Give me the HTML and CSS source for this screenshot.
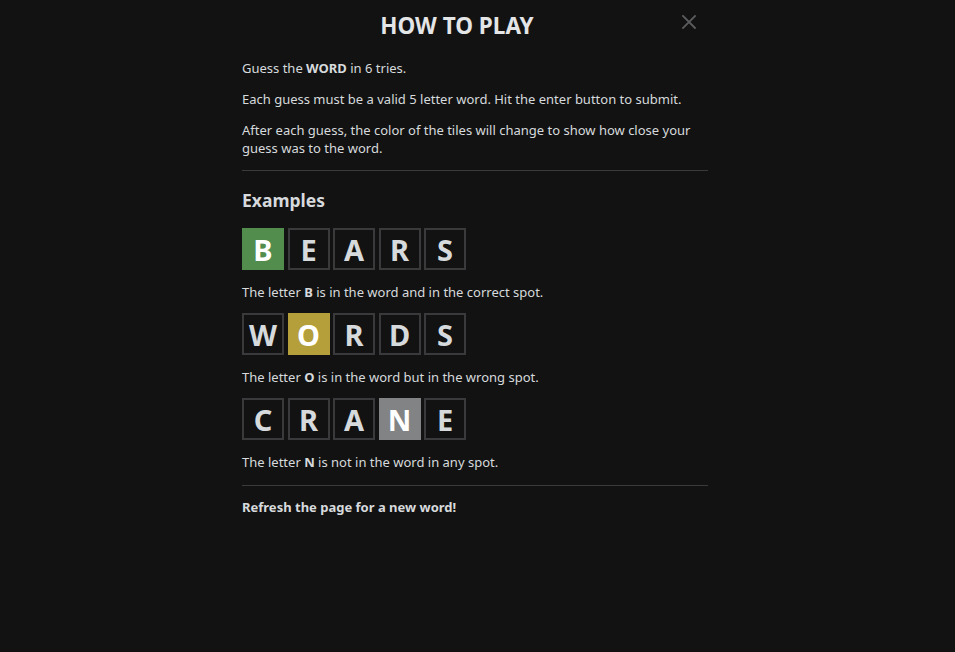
FILE: index.html
```html
<!DOCTYPE html>
<html lang="en">
<head>
<meta charset="utf-8">
<title>How to play</title>
<link rel="stylesheet" href="styles.css">
</head>
<body>
<main class="help">
  <header class="help-header">
    <h1 class="help-title">HOW TO PLAY</h1>
    <button class="close" aria-label="Close">
      <svg width="14" height="14" viewBox="0 0 14 14"><path d="M1 1 L13 13 M13 1 L1 13" stroke="#5b5c5e" stroke-width="1.8" fill="none" stroke-linecap="square"/></svg>
    </button>
  </header>
  <section class="intro">
    <p>Guess the <strong>WORD</strong> in 6 tries.</p>
    <p>Each guess must be a valid 5 letter word. Hit the enter button to submit.</p>
    <p>After each guess, the color of the tiles will change to show how close your guess was to the word.</p>
  </section>
  <hr class="rule">
  <section class="examples">
    <h2 class="examples-title">Examples</h2>
    <div class="row">
      <div class="tile correct">B</div><div class="tile">E</div><div class="tile">A</div><div class="tile">R</div><div class="tile">S</div>
    </div>
    <p class="caption">The letter <strong>B</strong> is in the word and in the correct spot.</p>
    <div class="row">
      <div class="tile">W</div><div class="tile present">O</div><div class="tile">R</div><div class="tile">D</div><div class="tile">S</div>
    </div>
    <p class="caption">The letter <strong>O</strong> is in the word but in the wrong spot.</p>
    <div class="row">
      <div class="tile">C</div><div class="tile">R</div><div class="tile">A</div><div class="tile absent">N</div><div class="tile">E</div>
    </div>
    <p class="caption">The letter <strong>N</strong> is not in the word in any spot.</p>
  </section>
  <hr class="rule rule-bottom">
  <p class="refresh">Refresh the page for a new word!</p>
</main>
</body>
</html>
```

FILE: styles.css
```css
html, body {
  margin: 0;
  padding: 0;
  background: #121213;
  height: 100%;
}
body {
  font-family: "Noto Sans", "Open Sans", sans-serif;
  color: #d7dadc;
  font-size: 13px;
}
.help {
  width: 466px;
  margin: 0 0 0 242px;
  padding-top: 8px;
}
.help-header {
  display: flex;
  align-items: flex-start;
  height: 34px;
}
.help-title {
  flex: 1;
  margin: 0;
  padding-top: 2px;
  text-align: center;
  font-size: 22.5px;
  line-height: 32px;
  font-weight: 700;
  color: #e3e5e6;
}
.close {
  width: 36px;
  height: 32px;
  padding: 0;
  margin: 0;
  border: 0;
  background: none;
  display: flex;
  align-items: center;
  justify-content: center;
  transform: translate(-1px, -2px);
}
.intro {
  padding-top: 17px;
}
.intro p {
  margin: 0 0 13px;
  line-height: 18px;
}
.intro p:last-child {
  margin-bottom: 0;
}
.rule {
  border: 0;
  height: 1px;
  background: #3a3a3c;
  margin: 13px 0 0;
}
.examples-title {
  margin: 18px 0 0;
  font-size: 17.5px;
  line-height: 22px;
  font-weight: 700;
  color: #d7dadc;
}
.row {
  display: flex;
  gap: 3.5px;
  margin-top: 12px;
}
.examples-title + .row {
  margin-top: 17px;
}
.tile {
  box-sizing: border-box;
  width: 42px;
  height: 42px;
  border: 2px solid #3a3a3c;
  display: flex;
  align-items: center;
  justify-content: center;
  font-size: 29px;
  font-weight: 700;
  color: #d7dadc;
  line-height: 1;
}
.tile.correct {
  background: #538d4e;
  border-color: #538d4e;
  color: #fff;
}
.tile.present {
  background: #b59f3b;
  border-color: #b59f3b;
  color: #fff;
}
.tile.absent {
  background: #818384;
  border-color: #818384;
  color: #fff;
}
.caption {
  margin: 13px 0 0;
  line-height: 18px;
}
.rule-bottom {
  margin-top: 14px;
}
.refresh {
  margin: 12px 0 0;
  line-height: 18px;
  font-weight: 700;
}
```
